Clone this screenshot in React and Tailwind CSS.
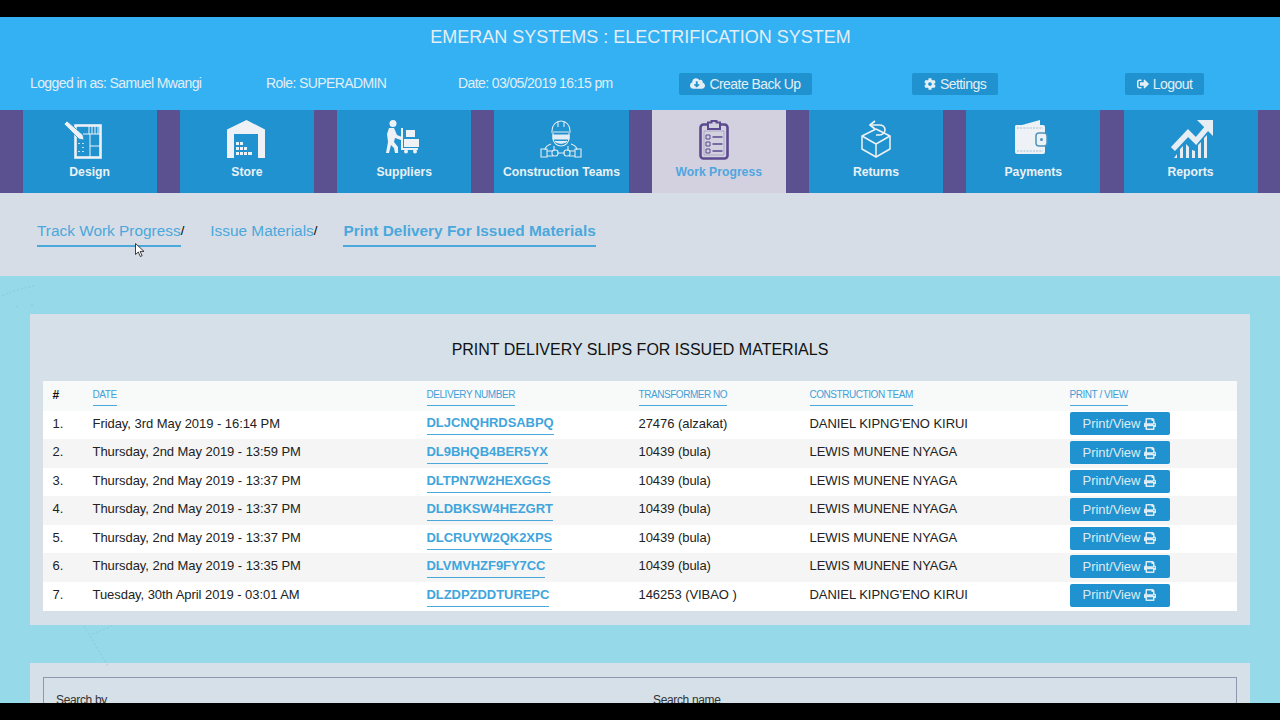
import { FaCloudDownloadAlt, FaCog, FaPrint, FaSignOutAlt } from "react-icons/fa";

const DesignIcon = () => (
  <svg width="40" height="39" viewBox="0 0 40 39" fill="none" stroke="#eef2f6">
    <rect x="12.500" y="5.500" width="25" height="32" strokeWidth="2.600" />
    <path d="M26 5v9M29 5v9M32 5v9M35 5v9M20 14h18M27 14v23M27 26h10" strokeWidth="1" />
    <path d="M16 23v1M20 23v1M20 27v1M20 31v1M16 31v1" strokeWidth="1.600" />
    <path d="M4 1L1 4l15 15 5 1-1-5z" fill="#eef2f6" stroke="#2092cf" strokeWidth="0.800" />
  </svg>
);

const StoreIcon = () => (
  <svg width="39" height="38" viewBox="0 0 39 38">
    <path d="M19.500 0L38 9.500V38H31V14H7v24H0V9.500z" fill="#eef2f6" />
    <path
      d="M9 22h3v3H9zM13 22h3v3h-3zM9 27h3v3H9zM13 27h3v3h-3zM17 27h3v3h-3zM9 32h3v3H9zM13 32h3v3h-3zM17 32h3v3h-3zM21 32h4v3h-4z"
      fill="#eef2f6"
    />
  </svg>
);

const SuppliersIcon = () => (
  <svg width="34" height="34" viewBox="0 0 34 34" fill="none">
    <circle cx="8" cy="3.500" r="3.500" fill="#eef2f6" />
    <path d="M4 8h5l3 7 5 2-1 3-6-2-1 4 4 5v6H10l-1-5-3-3-2 8H1l2-11-1-8z" fill="#eef2f6" />
    <path d="M17 8v21h16" stroke="#eef2f6" strokeWidth="2" />
    <path d="M21 10h9v7h-9zM19 19h15v8H19z" fill="#eef2f6" />
    <circle cx="21" cy="31.500" r="2" fill="#eef2f6" />
    <circle cx="30" cy="31.500" r="2" fill="#eef2f6" />
  </svg>
);

const WorkerIcon = () => (
  <svg width="42" height="38" viewBox="0 0 42 38" fill="none" stroke="#e4edf3" strokeWidth="1.100">
    <path d="M12 11c0-6 4-10 9-10s9 4 9 10M11 12h20M18 2v5M24 2v5" />
    <path d="M13 13v5c0 5 4 8 8 8s8-3 8-8v-5" />
    <path d="M13 15h16v4H13z" fill="#e4edf3" />
    <path d="M15 21c2 3 10 3 12 0" fill="#e4edf3" />
    <path d="M11 24c-3 1-6 3-6 6M31 24c3 1 6 3 6 6M14 26v5M28 26v5" />
    <path d="M1 29h6v8H1zM35 29h6v8h-6zM7 31h6M29 31h6M7 36h6M29 36h6M17 33h8" />
    <rect x="12" y="30" width="6" height="6" rx="2.500" />
    <rect x="24" y="30" width="6" height="6" rx="2.500" />
  </svg>
);

const ClipboardIcon = () => (
  <svg width="30" height="40" viewBox="0 0 30 40" fill="none" stroke="#5b4a8f">
    <rect x="1.500" y="4.500" width="27" height="34" rx="3" strokeWidth="2.600" fill="#d3d1df" />
    <path d="M9 2.500h3.500V1h5v1.500H21V9H9z" fill="#d3d1df" strokeWidth="2" />
    <path d="M5 11h20v24H5z" strokeWidth="0.600" opacity="0.500" />
    <path d="M7 15h4v4H7zM7 22h4v4H7zM7 29h4v4H7z" strokeWidth="1" />
    <path d="M13.500 17h10M13.500 24h10M13.500 31h10" strokeWidth="1.500" />
  </svg>
);

const ReturnsIcon = () => (
  <svg width="32" height="38" viewBox="0 0 32 38" fill="none" stroke="#eef2f6" strokeWidth="1.500" strokeLinejoin="round">
    <path d="M16 9L30 16v13L16 37 2 29V16z" />
    <path d="M2 16l14 8 14-8M16 24v13" />
    <path d="M11 5h8c4 0 6 2 6 5s-3 5-6 5h-3" strokeWidth="1.600" />
    <path d="M15 1l-5 4 5 4" strokeWidth="1.800" />
  </svg>
);

const WalletIcon = () => (
  <svg width="34" height="34" viewBox="0 0 34 34" fill="none">
    <path d="M8 5L26 0v5z" fill="#eef2f6" />
    <path d="M2 5h27a2 2 0 012 2v25a2 2 0 01-2 2H3a2 2 0 01-2-2V6z" fill="#eef2f6" />
    <path d="M3 8h26M3 31h26" stroke="#8db4cd" strokeWidth="0.800" strokeDasharray="2 1.200" />
    <rect x="22" y="13" width="11" height="13" rx="3" fill="#eef2f6" stroke="#4c94bd" strokeWidth="1.500" />
    <circle cx="27.500" cy="19.500" r="1.500" fill="#4c94bd" />
  </svg>
);

const ChartIcon = () => (
  <svg width="42" height="38" viewBox="0 0 42 38" fill="none">
    <path d="M2 29L17 13l8 8 11-13" stroke="#e6edf3" strokeWidth="5.500" />
    <path d="M42 0H26l16 16z" fill="#e6edf3" />
    <path d="M3 38l3-4v4zM9 38v-9l3-3v12zM15 38V24l3 3v11zM21 38v-8l3 1v7zM27 38V25l3-3v16zM33 38V18l3-3v23z" fill="#e6edf3" />
  </svg>
);

const navItems = [
  { label: "Design", icon: <DesignIcon />, iconClass: "mr-[14px]" },
  { label: "Store", icon: <StoreIcon />, iconClass: "" },
  { label: "Suppliers", icon: <SuppliersIcon />, iconClass: "mr-[5px]" },
  { label: "Construction Teams", icon: <WorkerIcon />, iconClass: "" },
  { label: "Work Progress", icon: <ClipboardIcon />, iconClass: "mr-[10px]", active: true },
  { label: "Returns", icon: <ReturnsIcon />, iconClass: "" },
  { label: "Payments", icon: <WalletIcon />, iconClass: "mr-[5px]" },
  { label: "Reports", icon: <ChartIcon />, iconClass: "ml-[3px]" },
];

const rows = [
  ["Friday, 3rd May 2019 - 16:14 PM", "DLJCNQHRDSABPQ", "27476 (alzakat)", "DANIEL KIPNG'ENO KIRUI"],
  ["Thursday, 2nd May 2019 - 13:59 PM", "DL9BHQB4BER5YX", "10439 (bula)", "LEWIS MUNENE NYAGA"],
  ["Thursday, 2nd May 2019 - 13:37 PM", "DLTPN7W2HEXGGS", "10439 (bula)", "LEWIS MUNENE NYAGA"],
  ["Thursday, 2nd May 2019 - 13:37 PM", "DLDBKSW4HEZGRT", "10439 (bula)", "LEWIS MUNENE NYAGA"],
  ["Thursday, 2nd May 2019 - 13:37 PM", "DLCRUYW2QK2XPS", "10439 (bula)", "LEWIS MUNENE NYAGA"],
  ["Thursday, 2nd May 2019 - 13:35 PM", "DLVMVHZF9FY7CC", "10439 (bula)", "LEWIS MUNENE NYAGA"],
  ["Tuesday, 30th April 2019 - 03:01 AM", "DLZDPZDDTUREPC", "146253 (VIBAO )", "DANIEL KIPNG'ENO KIRUI"],
];

const headers = ["DATE", "DELIVERY NUMBER", "TRANSFORMER NO", "CONSTRUCTION TEAM", "PRINT / VIEW"];

const TopButton = ({ children }) => (
  <button className="flex h-[22px] items-center justify-center gap-1 rounded-xs bg-[#2092cf] pb-[1px] text-sm tracking-[-0.55px] text-[#e3eef5]">
    {children}
  </button>
);

export default function App() {
  return (
    <div className="relative flex h-screen flex-col overflow-hidden bg-[#96d9e8] font-['Liberation_Sans',Arial,sans-serif]">
      <div className="h-[17px] shrink-0 bg-black" />

      {/* ================= HEADER ================= */}
      <header className="h-[93px] shrink-0 bg-[#33b1f3] text-[#e3eef5]">
        <h1 className="pl-[1px] pt-[9px] text-center text-lg leading-[23px]">
          EMERAN SYSTEMS : ELECTRIFICATION SYSTEM
        </h1>
        <div className="mt-[24px] flex items-center pl-[30px] text-sm tracking-[-0.6px]">
          <span className="w-[236px] pb-[2px]">Logged in as: Samuel Mwangi</span>
          <span className="w-[192px] pb-[2px]">Role: SUPERADMIN</span>
          <span className="w-[221px] pb-[2px]">Date: 03/05/2019 16:15 pm</span>
          <div className="w-[233px]">
            <TopButton>
              <span className="flex w-[133px] items-center justify-center gap-1">
                <FaCloudDownloadAlt className="text-[15px]" /> Create Back Up
              </span>
            </TopButton>
          </div>
          <div className="w-[213px]">
            <TopButton>
              <span className="flex w-[86px] items-center justify-center gap-1">
                <FaCog className="text-xs" /> Settings
              </span>
            </TopButton>
          </div>
          <TopButton>
            <span className="flex w-[79px] items-center justify-center gap-1">
              <FaSignOutAlt className="text-xs" /> Logout
            </span>
          </TopButton>
        </div>
      </header>

      {/* ================= NAV ================= */}
      <nav className="grid h-[83px] shrink-0 grid-cols-8 gap-x-[23.200px] bg-[#5b5090] pl-[22.600px] pr-[22.400px]">
        {navItems.map((item) => (
          <div
            key={item.label}
            className={`flex flex-col items-center ${item.active ? "bg-[#d3d1df] text-[#4fa6e0]" : "bg-[#2092cf] text-[#e9f1f6]"}`}
          >
            <div className={`flex h-[52px] items-start pt-[10px] ${item.iconClass}`}>{item.icon}</div>
            <span className="mt-[2px] text-[12.200px] font-bold leading-[16px]">{item.label}</span>
          </div>
        ))}
      </nav>

      {/* ================= BREADCRUMB ================= */}
      <div className="flex h-[83px] shrink-0 items-start bg-[#d7dde6] pl-[37px] pt-[28px] text-[15.400px] leading-[20px] text-[#4aa8dc]">
        <span className="border-b-2 border-[#4aa8dc] pb-[4px]">Track Work Progress</span>
        <span className="mr-[26px] text-[13px] text-black">/</span>
        <span>Issue Materials</span>
        <span className="mr-[26px] text-[13px] text-black">/</span>
        <span className="border-b-2 border-[#4aa8dc] pb-[4px] font-bold">Print Delivery For Issued Materials</span>
      </div>

      {/* ================= CONTENT ================= */}
      <main className="min-h-0 flex-1 overflow-hidden px-[30px] pt-[38px]">
        <section className="bg-[#d5e0e8] px-[13px] pb-[14px] pt-[26px]">
          <h2 className="text-center text-base leading-[20px] text-[#111]">
            PRINT DELIVERY SLIPS FOR ISSUED MATERIALS
          </h2>
          <table className="mt-[21px] w-full table-fixed border-collapse text-left text-[13px] tracking-[-0.05px] text-[#222]">
            <thead>
              <tr className="h-[29.700px] bg-[#f8f9f9]">
                <th className="w-[49.500px] pb-[2px] pl-[9.500px] text-xs font-bold text-[#111]">#</th>
                {headers.map((h, i) => (
                  <th
                    key={h}
                    className={`pb-[2px] font-normal ${["w-[334px]", "w-[212px]", "w-[171px]", "w-[260px]", ""][i]}`}
                  >
                    <span className="inline-block border-b border-[#4aa8dc] pb-[3px] text-[10px] leading-[14px] tracking-[-0.45px] text-[#3fa0d8]">
                      {h}
                    </span>
                  </th>
                ))}
              </tr>
            </thead>
            <tbody>
              {rows.map((row, i) => (
                <tr key={row[1]} className={`h-[28.550px] ${i % 2 ? "bg-[#f5f5f5]" : "bg-white"}`}>
                  <td className="pb-[3px] pl-[9.500px]">{i + 1}.</td>
                  <td className="pb-[3px]">{row[0]}</td>
                  <td>
                    <span className="block w-fit border-b border-[#4aa8dc] pb-[3px] font-bold leading-[17px] text-[#3fa5dc]">
                      {row[1]}
                    </span>
                  </td>
                  <td className="pb-[3px]">{row[2]}</td>
                  <td className="pb-[3px]">{row[3]}</td>
                  <td className="pb-[2px]">
                    <button className="flex h-[23px] w-[100px] items-center justify-center gap-1 rounded-xs bg-[#2092cf] text-[13px] text-[#dcebf4]">
                      Print/View <FaPrint className="text-xs" />
                    </button>
                  </td>
                </tr>
              ))}
            </tbody>
          </table>
        </section>

        <section className="mt-[38px] h-[80px] bg-[#d5e0e8] px-[13px] pt-[14px]">
          <div className="flex h-[60px] border border-[#8f97ad] pl-[12px] pt-[14px] text-xs tracking-[-0.35px] text-[#333]">
            <span className="w-[597px]">Search by</span>
            <span>Search name</span>
          </div>
        </section>
      </main>

      <div className="h-[17px] shrink-0 bg-black" />

      {/* mouse pointer from the capture */}
      <svg className="absolute left-[135px] top-[243px]" width="10" height="15" viewBox="0 0 10 15">
        <path d="M.5.5v11l2.800-2.500 2 4.500 1.800-.8-2-4.300H9z" fill="#fff" stroke="#111" strokeWidth="0.800" />
      </svg>

      <svg className="absolute left-0 top-[276px]" width="120" height="390" viewBox="0 0 120 390" fill="none" stroke="#7dbfce" strokeWidth="0.600" strokeDasharray="2 2">
        <path d="M2 20l14-6 18-4M16 30l3 2M32 28v4" />
        <path d="M84 350l24 40M92 358l20-8" />
      </svg>
    </div>
  );
}
